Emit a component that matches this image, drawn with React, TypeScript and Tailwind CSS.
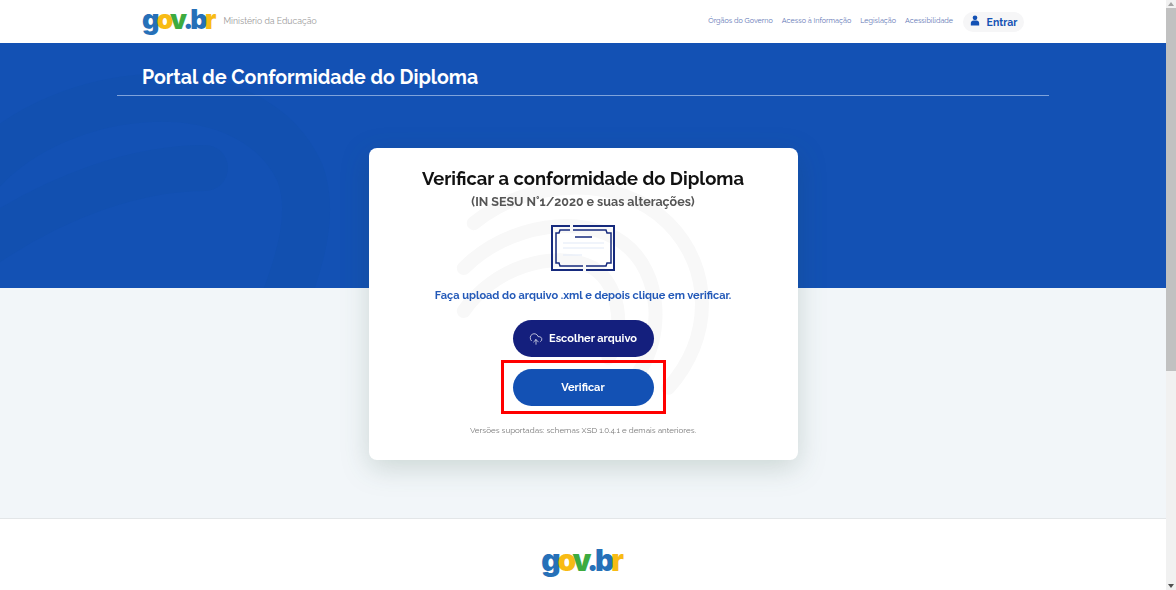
import { CloudUpload } from 'lucide-react'

const NAV_LINKS = ['Órgãos do Governo', 'Acesso à Informação', 'Legislação', 'Acessibilidade']
const FONT = "font-['Raleway','Lato','Liberation_Sans',sans-serif]"

function Logo({ className }: { className: string }) {
  return (
    <span className={`font-['Inter',sans-serif] font-black leading-none tracking-[-0.11em] ${className}`}>
      <span className="text-[#2670b8]">g</span>
      <span className="text-[#f8bb14]">o</span>
      <span className="text-[#3dab3f]">v</span>
      <span className="text-[#2670b8]">.b</span>
      <span className="text-[#f8bb14]">r</span>
    </span>
  )
}

function Header() {
  return (
    <header className="h-[43px] bg-white flex items-center pl-[142px] pr-[142px]">
      <Logo className="text-[27px] -mt-1" />
      <span className="ml-[10px] text-[8.7px] text-[#9a9a9a]">Ministério da Educação</span>
      <nav className="ml-auto flex items-center gap-[9px] text-[7.2px] text-[#5c74b4]">
        {NAV_LINKS.map((link) => (
          <a key={link}>{link}</a>
        ))}
      </nav>
      <button className="ml-[10px] h-5 w-[61px] rounded-full bg-[#f6f6f7] flex items-center justify-center gap-[7px] text-[10.5px] leading-[11px] font-bold text-[#1351b4]">
        <svg viewBox="0 0 12 12" className="w-[10px] h-[11px] -mt-[2px]" fill="#1351b4">
          <circle cx="6" cy="2.800" r="2.800" />
          <path d="M1 12V9C1 7.300 2.500 6 4 6h4c1.500 0 3 1.300 3 3V12z" />
        </svg>
        <span className="pt-[2px]">Entrar</span>
      </button>
    </header>
  )
}

// faint swirl behind the blue band
function BandSwirl() {
  return (
    <svg viewBox="0 0 1166 245" className="absolute inset-0 w-full h-full" fill="none" stroke="#1250b0" strokeLinecap="round">
      <path d="M-20 205C60 150 140 125 205 125" strokeWidth="46" />
      <path d="M-20 130C60 40 250 20 300 130C315 170 300 220 280 270" strokeWidth="48" />
    </svg>
  )
}

function Fingerprint() {
  return (
    <svg viewBox="0 0 430 312" className="absolute inset-0 w-full h-full" fill="none" stroke="#f8f8f8" strokeWidth="14" strokeLinecap="round">
      <path d="M105 75C160 30 250 25 300 75C345 120 345 190 300 240" />
      <path d="M95 120C140 75 215 65 255 95C295 125 295 190 270 225" />
      <path d="M95 163C125 120 185 100 225 120C255 140 255 190 240 210" />
    </svg>
  )
}

function DiplomaIcon() {
  return (
    <svg viewBox="0 0 64 46" className="w-16 h-[46px]" fill="none" stroke="#162a7d" strokeWidth="2">
      <path d="M19 1H1V45H32" />
      <path d="M22 1H63V45H35" />
      <path d="M19 5H9L8 8H5V38H8L9 41H32M35 41H55L56 38H60V8H56L55 5H22" strokeWidth="1.500" />
      <path d="M24 12H41" strokeWidth="1.500" />
      <path d="M12 18H53M12 23H53M12 30H31" stroke="#e2eaf8" strokeWidth="1.200" />
    </svg>
  )
}

function VerifyCard() {
  return (
    <section className="relative mx-auto w-[429px] h-[312px] overflow-hidden rounded-lg bg-white">
      <Fingerprint />
      <div className="relative flex flex-col items-center pt-[18px]">
        <h2 className="text-[18.4px] leading-[25px] font-bold text-[#111]">Verificar a conformidade do Diploma</h2>
        <p className="mt-[3px] text-[12.5px] leading-4 font-bold text-[#555]">(IN SESU N°1/2020 e suas alterações)</p>
        <div className="mt-[15px]">
          <DiplomaIcon />
        </div>
        <p className="mt-[17px] text-[11px] leading-4 font-bold text-[#2359b8]">
          Faça upload do arquivo .xml e depois clique em verificar.
        </p>
        <button className="mt-4 w-[141px] h-[37px] rounded-full bg-[#141f7d] flex items-center justify-center gap-[6px] text-[11px] font-bold text-white">
          <CloudUpload size={14} strokeWidth={1.200} />
          <span className="pt-[2px]">Escolher arquivo</span>
        </button>
        <div className="mt-[3px] border-[3px] border-[#ff0000] w-[165px] h-[54px] flex items-center justify-center">
          <button className="w-[141px] h-[37px] rounded-full bg-[#1351b4] pt-[2px] text-[11px] font-bold text-white">Verificar</button>
        </div>
        <p className="mt-[10px] text-[8px] leading-3 text-[#777]">Versões suportadas: schemas XSD 1.0.4.1 e demais anteriores.</p>
      </div>
    </section>
  )
}

function Scrollbar() {
  return (
    <div className="w-[10px] h-full bg-[#f1f1f1] flex flex-col items-center">
      <div className="h-2 flex items-center">
        <div className="w-0 h-0 border-x-[3px] border-x-transparent border-b-[4px] border-b-[#a3a3a3]" />
      </div>
      <div className="w-full h-[363px] bg-[#c1c1c1]" />
      <div className="mt-auto h-2 flex items-center">
        <div className="w-0 h-0 border-x-[3px] border-x-transparent border-t-[4px] border-t-[#505050]" />
      </div>
    </div>
  )
}

export default function App() {
  return (
    <div className={`h-[590px] w-[1176px] flex overflow-hidden ${FONT}`}>
      <div className="w-[1166px] h-full flex flex-col">
        <Header />
        <div className="relative h-[245px] shrink-0 overflow-hidden bg-[#1351b4] px-[117px]">
          <BandSwirl />
          <div className="relative w-[932px] h-[53px] border-b border-[#7fa3db] pl-[25px] pt-[22px]">
            <h1 className="text-[19.5px] leading-[26px] font-bold text-white">Portal de Conformidade do Diploma</h1>
          </div>
        </div>
        <main className="h-[231px] shrink-0 bg-[#f2f6f9] border-b border-[#e3e6e8]">
          <div className="relative -mt-[140px] drop-shadow-[0_8px_14px_rgba(30,70,50,0.18)]">
            <VerifyCard />
          </div>
        </main>
        <footer className="flex-1 bg-white flex justify-center pt-[26px] pr-[4px]">
          <Logo className="text-[30px]" />
        </footer>
      </div>
      <Scrollbar />
    </div>
  )
}
